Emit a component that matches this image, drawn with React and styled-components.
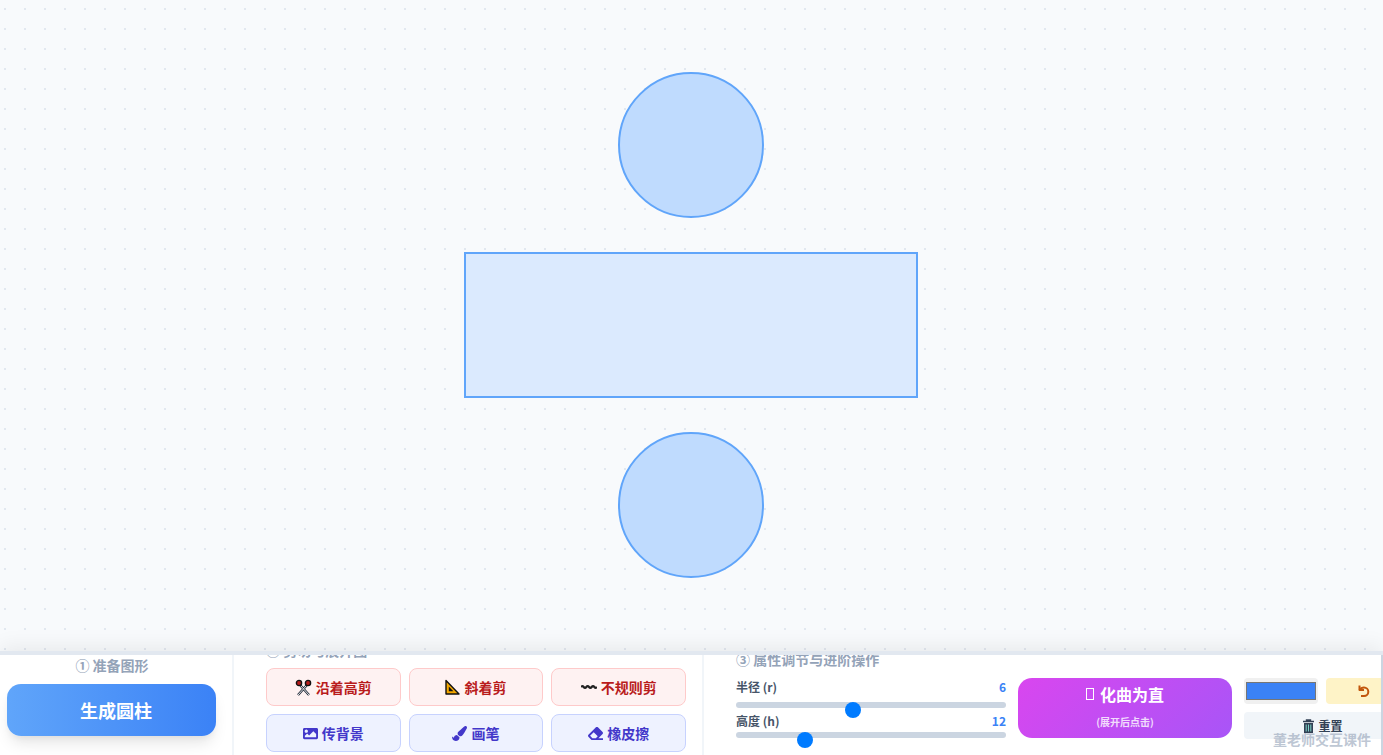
import React, { useState } from 'react'
import styled, { createGlobalStyle } from 'styled-components'
import { FaImage, FaPaintBrush, FaEraser } from 'react-icons/fa'

const GlobalStyle = createGlobalStyle`
  * { box-sizing: border-box; }
  html, body { margin: 0; height: 100%; overflow: hidden; }
  body {
    font-family: "Noto Sans CJK SC", "Noto Sans", sans-serif;
    background: #f8fafc;
  }
`

const ScissorsIcon = () => (
  <svg width="17" height="17" viewBox="0 0 17 17">
    <path d="M5.5 6.5 14 16M11.5 6.5 3 16" stroke="#1f2937" strokeWidth="2.4" />
    <path d="M5.5 6.5 14 16M11.5 6.5 3 16" stroke="#e5e7eb" strokeWidth="1" />
    <circle cx="4" cy="4" r="2.6" fill="#b91c1c" stroke="#111" strokeWidth="1.4" />
    <circle cx="13" cy="4" r="2.6" fill="#b91c1c" stroke="#111" strokeWidth="1.4" />
  </svg>
)

const SetSquareIcon = () => (
  <svg width="15" height="16" viewBox="0 0 15 16">
    <path d="M1 1.5V15H14Z" fill="#f5a800" stroke="#111" strokeWidth="1.4" strokeLinejoin="round" />
    <path d="M3.8 7.5V12.2H8.4Z" fill="#111" />
  </svg>
)

const WavyIcon = () => (
  <svg width="16" height="16" viewBox="0 0 16 16">
    <path d="M0 8q1.33-1.8 2.67 0t2.67 0 2.67 0 2.67 0 2.67 0 2.67 0" fill="none" stroke="#222" strokeWidth="2.2" />
  </svg>
)

const TrashIcon = () => (
  <svg width="13" height="14" viewBox="0 0 13 14">
    <path d="M1 2.5H12M4.5 2.5V1H8.5V2.5" fill="none" stroke="#334155" strokeWidth="1.4" />
    <path d="M2 4H11V14H2Z" fill="#334155" />
    <path d="M4.2 5.5V12.5M6.5 5.5V12.5M8.8 5.5V12.5" stroke="#7dd3c8" strokeWidth="1" />
  </svg>
)

const UndoIcon = () => (
  <svg width="14" height="14" viewBox="0 0 14 14" fill="none" stroke="currentColor" strokeWidth="2">
    <path d="M2.5 1.5V6H7" strokeLinejoin="round" />
    <path d="M2.5 6C3.6 4.2 5 3.4 7 3.4a4.3 4.3 0 0 1 0 8.6H4" />
  </svg>
)

export default function App() {
  const [radius, setRadius] = useState(6)
  const [height, setHeight] = useState(12)

  return (
    <Page>
      <GlobalStyle />
      <Stage>
        <Circle />
        <Side />
        <Circle />
      </Stage>
      <Panel>
        <FirstSection>
          <FirstTitle>① 准备图形</FirstTitle>
          <GenerateButton>生成圆柱</GenerateButton>
        </FirstSection>
        <CutSection>
          <CutTitle>② 剪切与展开图</CutTitle>
          <ToolGrid>
            <ToolButton $danger><ScissorsIcon />沿着高剪</ToolButton>
            <ToolButton $danger><SetSquareIcon />斜着剪</ToolButton>
            <ToolButton $danger><WavyIcon />不规则剪</ToolButton>
            <ToolButton><FaImage size={15} />传背景</ToolButton>
            <ToolButton><FaPaintBrush size={15} />画笔</ToolButton>
            <ToolButton><FaEraser size={15} />橡皮擦</ToolButton>
          </ToolGrid>
        </CutSection>
        <PropsSection>
          <PropsTitle>③ 属性调节与进阶操作</PropsTitle>
          <PropsRow>
            <Sliders>
              <SliderHead><span>半径 (r)</span><SliderValue>{radius}</SliderValue></SliderHead>
              <SliderWrap $top={7}>
                <Range min={0} max={14} value={radius} onChange={(e) => setRadius(+e.target.value)} />
              </SliderWrap>
              <SliderHead><span>高度 (h)</span><SliderValue>{height}</SliderValue></SliderHead>
              <SliderWrap $top={3}>
                <Range min={0} max={50} value={height} onChange={(e) => setHeight(+e.target.value)} />
              </SliderWrap>
            </Sliders>
            <MagicButton>
              <MagicLabel><Tofu />化曲为直</MagicLabel>
              <MagicHint>(展开后点击)</MagicHint>
            </MagicButton>
            <Extras>
              <ExtrasTop>
                <ColorBox><ColorFill /></ColorBox>
                <UndoButton><UndoIcon /></UndoButton>
              </ExtrasTop>
              <ResetButton><TrashIcon />重置</ResetButton>
            </Extras>
          </PropsRow>
        </PropsSection>
        <Watermark>董老师交互课件</Watermark>
        <EdgeStrip />
      </Panel>
    </Page>
  )
}

const Page = styled.div`
  width: 1383px;
  height: 755px;
  display: flex;
  flex-direction: column;
  overflow: hidden;
`

const Stage = styled.div`
  height: 651px;
  flex-shrink: 0;
  display: flex;
  flex-direction: column;
  align-items: center;
  gap: 34px;
  padding: 72px 2px 0 0;
  background-color: #f8fafc;
  background-image: radial-gradient(#e2e8f0 1px, transparent 1px);
  background-size: 20px 20px;
  background-position: -5px -1px;
`

const Circle = styled.div`
  width: 146px;
  height: 146px;
  border-radius: 50%;
  background: #bfdbfe;
  border: 2px solid #60a5fa;
`

const Side = styled.div`
  width: 454px;
  height: 146px;
  background: #dbeafe;
  border: 2px solid #60a5fa;
`

const Panel = styled.div`
  position: relative;
  height: 104px;
  flex-shrink: 0;
  display: flex;
  background: #fff;
  border-top: 4px solid #e2e8f0;
  box-shadow: 0 -4px 20px rgba(0, 0, 0, 0.07);
  overflow: hidden;
`

const FirstSection = styled.div`
  width: 234px;
  flex-shrink: 0;
  padding: 0 7px;
  border-right: 2px solid #f1f5f9;
`

const SectionTitle = styled.div`
  font-size: 14px;
  line-height: 20px;
  font-weight: 700;
  color: #94a3b8;
`

const FirstTitle = styled(SectionTitle)`
  text-align: center;
  padding-right: 8px;
  margin-bottom: 9px;
`

const GenerateButton = styled.button`
  display: block;
  width: 209px;
  height: 52px;
  border: none;
  border-radius: 14px;
  padding: 0 0 0 9px;
  font: inherit;
  font-size: 18px;
  font-weight: 700;
  color: #fff;
  background: linear-gradient(to right, #60a5fa, #3b82f6);
  box-shadow: 0 10px 15px -3px rgba(0, 0, 0, 0.1), 0 4px 6px -2px rgba(0, 0, 0, 0.05);
`

const CutSection = styled.div`
  width: 470px;
  flex-shrink: 0;
  padding: 0 16px 0 32px;
  border-right: 2px solid #f1f5f9;
`

const CutTitle = styled(SectionTitle)`
  margin-top: -15px;
  margin-bottom: 8px;
`

const ToolGrid = styled.div`
  display: grid;
  width: 420px;
  grid-template-columns: repeat(3, 1fr);
  grid-auto-rows: 38px;
  gap: 8px;
`

const ToolButton = styled.button`
  display: flex;
  align-items: center;
  justify-content: center;
  gap: 4px;
  padding: 0;
  border-radius: 8px;
  font: inherit;
  font-size: 14px;
  font-weight: 700;
  color: ${(p) => (p.$danger ? '#b91c1c' : '#4338ca')};
  background: ${(p) => (p.$danger ? '#fef2f2' : '#eef2ff')};
  border: 1px solid ${(p) => (p.$danger ? '#fecaca' : '#c7d2fe')};
  svg { flex-shrink: 0; }
`

const PropsSection = styled.div`
  flex: 1;
  min-width: 0;
  padding-left: 32px;
`

const PropsTitle = styled(SectionTitle)`
  margin-top: -6px;
  margin-bottom: 9px;
`

const PropsRow = styled.div`
  display: flex;
  gap: 12px;
`

const Sliders = styled.div`
  width: 270px;
  flex-shrink: 0;
`

const SliderHead = styled.div`
  display: flex;
  justify-content: space-between;
  font-size: 12px;
  line-height: 17px;
  font-weight: 700;
  color: #475569;
`

const SliderValue = styled.span`
  color: #3b82f6;
`

const SliderWrap = styled.div`
  height: 17px;
  padding-top: ${(p) => p.$top}px;
`

const Range = styled.input.attrs({ type: 'range' })`
  display: block;
  appearance: none;
  width: 100%;
  height: 6px;
  margin: 0;
  border-radius: 3px;
  background: #cbd5e1;
  &::-webkit-slider-thumb {
    appearance: none;
    width: 16px;
    height: 16px;
    border-radius: 50%;
    background: #007bff;
    margin-top: 10px;
  }
`

const MagicButton = styled.button`
  width: 214px;
  height: 60px;
  flex-shrink: 0;
  display: flex;
  flex-direction: column;
  align-items: center;
  border: none;
  border-radius: 14px;
  padding: 4px 0 0;
  font: inherit;
  color: #fff;
  background: linear-gradient(135deg, #d946ef, #a855f7);
`

const MagicLabel = styled.span`
  display: flex;
  align-items: center;
  gap: 6px;
  font-size: 16px;
  line-height: 24px;
  font-weight: 700;
`

const Tofu = styled.i`
  display: block;
  width: 8px;
  height: 12px;
  border: 1px solid #fff;
`

const MagicHint = styled.span`
  font-size: 10px;
  line-height: 14px;
  margin-top: 9px;
  font-weight: 700;
  opacity: 0.8;
`

const Extras = styled.div`
  width: 157px;
  flex-shrink: 0;
  display: flex;
  flex-direction: column;
  gap: 8px;
`

const ExtrasTop = styled.div`
  display: flex;
  gap: 8px;
`

const ColorBox = styled.div`
  width: 74px;
  height: 26px;
  flex-shrink: 0;
  padding: 4px 2px;
  border-radius: 4px;
  background: #f0f0f0;
`

const ColorFill = styled.div`
  height: 100%;
  background: #3b82f6;
  border: 1px solid #767676;
`

const UndoButton = styled.button`
  width: 75px;
  height: 26px;
  flex-shrink: 0;
  display: flex;
  align-items: center;
  justify-content: center;
  padding: 0;
  border: none;
  border-radius: 4px;
  background: #fef3c7;
  color: #c2560c;
`

const ResetButton = styled.button`
  height: 27px;
  width: 157px;
  display: flex;
  align-items: center;
  justify-content: center;
  gap: 3px;
  padding: 0;
  border: none;
  border-radius: 4px;
  font: inherit;
  font-size: 12px;
  font-weight: 700;
  color: #334155;
  background: #f1f5f9;
`

const Watermark = styled.div`
  position: absolute;
  right: 12px;
  bottom: 6px;
  font-size: 14px;
  line-height: 20px;
  font-weight: 700;
  color: #94a3b8;
  opacity: 0.6;
  pointer-events: none;
`

const EdgeStrip = styled.div`
  position: absolute;
  top: 0;
  right: 0;
  bottom: 0;
  width: 2px;
  background: #cbd5e1;
`
